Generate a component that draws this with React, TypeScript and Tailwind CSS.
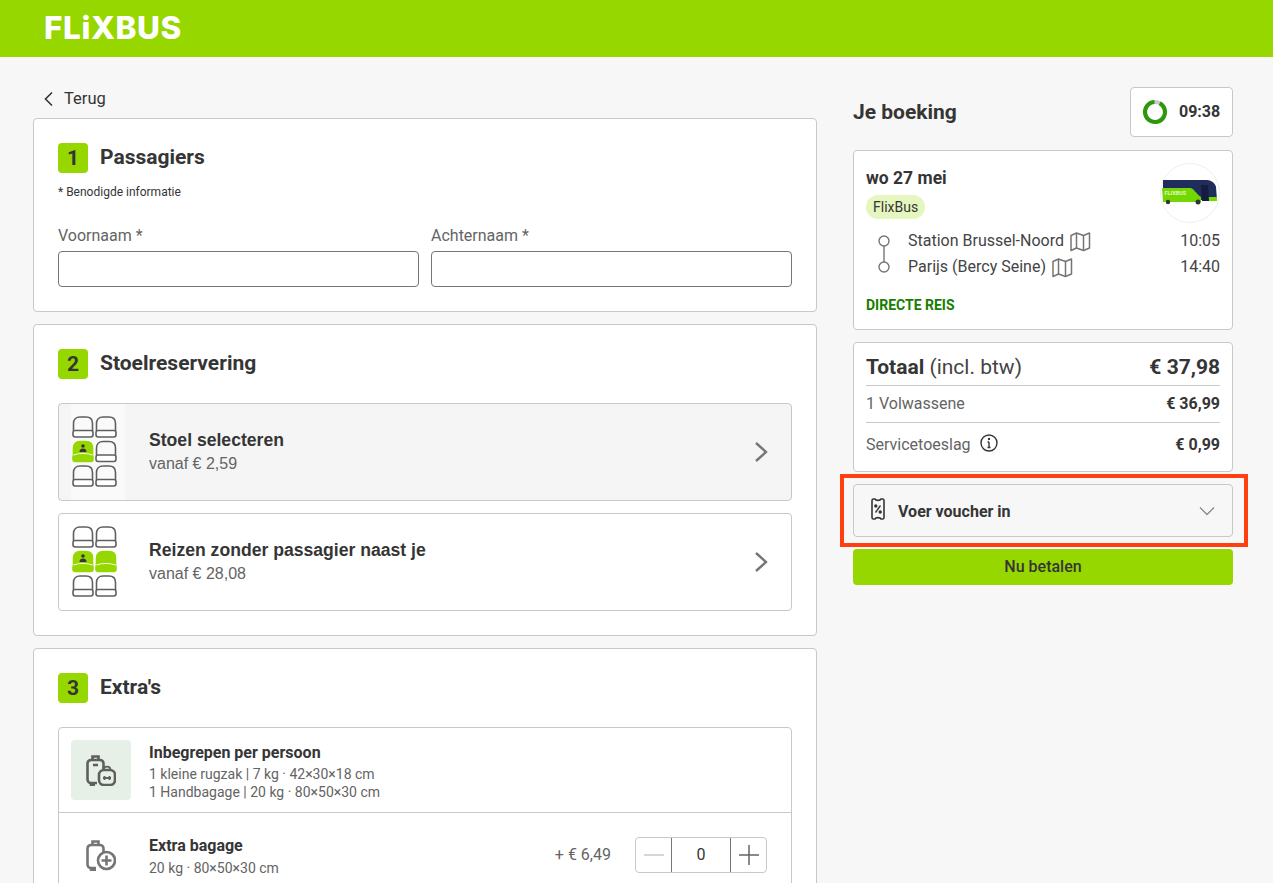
import React from "react";

const Seat = ({ x, y, on }: { x: number; y: number; on?: boolean }) => (
  <g transform={`translate(${x} ${y})`}>
    <path
      d="M1.500 15V7.500C1.500 3.500 4 1 8 1h6c4 0 6.500 2.500 6.500 6.500V15"
      fill={on ? "#97d700" : "none"}
      stroke={on ? "#97d700" : "#5f5f5f"}
      strokeWidth="1.600"
    />
    <rect x="1" y="14.500" width="20" height="6.500" rx="2.200" fill={on ? "#97d700" : "#fff"} stroke={on ? "#97d700" : "#5f5f5f"} strokeWidth="1.600" />
    {on && <path d="M1.500 14.500c5-2 14-2 19 0" fill="none" stroke="#fff" strokeWidth="1.200" />}
  </g>
);

const SeatIcon = ({ both }: { both?: boolean }) => (
  <svg width="50" height="72" viewBox="0 0 50 72" className="shrink-0">
    <Seat x={1} y={0} />
    <Seat x={24} y={0} />
    <Seat x={1} y={24.500} on />
    <Seat x={24} y={24.500} on={both} />
    <Seat x={1} y={49} />
    <Seat x={24} y={49} />
    <circle cx="12" cy="30" r="1.800" fill="#353535" />
    <path d="M8.500 36c0-2.500 1.500-3.500 3.500-3.500s3.500 1 3.500 3.500z" fill="#353535" />
  </svg>
);

const MapIcon = () => (
  <svg width="22" height="22" viewBox="0 0 22 22" fill="none" stroke="#757575" strokeWidth="1.500" strokeLinejoin="round" className="shrink-0">
    <path d="M2 5.500l5.500-2.500 7 2.500L20.500 3v15l-6 2.500L7.500 18 2 20.500z" />
    <path d="M7.500 3v15M14.500 5.500v15" />
  </svg>
);

const Badge = ({ n }: { n: number }) => (
  <span className="flex h-[30px] w-[30px] shrink-0 items-center justify-center rounded-[4px] bg-[#97d700] text-[21px] font-bold leading-none text-[#353535]">{n}</span>
);

const SectionTitle = ({ n, title }: { n: number; title: string }) => (
  <div className="flex items-center gap-3">
    <Badge n={n} />
    <h2 className="pb-[2px] text-[21px] font-bold leading-[28px]">{title}</h2>
  </div>
);

const Field = ({ label }: { label: string }) => (
  <div className="flex-1">
    <div className="mb-[3px] text-[16px] leading-[24px] text-[#646464]">{label}</div>
    <div className="h-[36px] rounded-[4px] border border-[#757575] bg-white" />
  </div>
);

const SeatRow = ({ title, price, both, active }: { title: string; price: string; both?: boolean; active?: boolean }) => (
  <div className={`flex h-[98px] items-center overflow-hidden rounded-[4px] border border-[#c8c8c8] pl-[12px] pr-[20px] ${active ? "bg-[#f5f5f5]" : "bg-white"}`}>
    <div className={`flex h-full w-[54px] shrink-0 items-center justify-start ${active ? "bg-[#fafafa]" : ""}`}>
      <SeatIcon both={both} />
    </div>
    <div className="ml-[24px] flex-1">
      <div className="text-[17.600px] font-bold leading-[22px] [font-family:'Liberation_Sans',sans-serif]">{title}</div>
      <div className="pt-[1px] text-[16px] leading-[24px] text-[#646464] [font-family:'Liberation_Sans',sans-serif]">{price}</div>
    </div>
    <svg width="20" height="24" viewBox="0 0 20 24" fill="none" stroke="#757575" strokeWidth="2.400">
      <path d="M5 3l10 9-10 9" />
    </svg>
  </div>
);

export default function App() {
  return (
    <div className="h-[883px] overflow-hidden bg-[#f7f7f7] text-[#353535] [font-family:Roboto,sans-serif]">
      <header className="flex h-[57px] items-center bg-[#97d700] pb-[2px] pl-[44px]">
        <span className="text-[31.500px] font-extrabold leading-none tracking-[0.6px] text-white [font-family:Inter,sans-serif]">FLiXBUS</span>
      </header>

      <main className="flex items-start gap-[36px] pl-[33px] pt-[30px]">
        <div className="w-[784px]">
          <div className="flex h-[31px] items-center gap-[9px] pb-[7px] pl-[9px] text-[16.500px] leading-[24px]">
            <svg width="13" height="16" viewBox="0 0 13 16" fill="none" stroke="#353535" strokeWidth="1.600">
              <path d="M10 1.500L3.500 8l6.500 6.500" />
            </svg>
            <span>Terug</span>
          </div>

          <div className="flex flex-col gap-[12px]">
            <section className="h-[194px] rounded-[4px] border border-[#c8c8c8] bg-white px-[24px] pt-[24px]">
              <SectionTitle n={1} title="Passagiers" />
              <p className="mt-[9px] text-[12px] leading-[20px]">* Benodigde informatie</p>
              <div className="mt-[22px] flex gap-[12px]">
                <Field label="Voornaam *" />
                <Field label="Achternaam *" />
              </div>
            </section>

            <section className="h-[312px] rounded-[4px] border border-[#c8c8c8] bg-white px-[24px] pt-[24px]">
              <SectionTitle n={2} title="Stoelreservering" />
              <div className="mt-[24px] flex flex-col gap-[12px]">
                <SeatRow title="Stoel selecteren" price="vanaf € 2,59" active />
                <SeatRow title="Reizen zonder passagier naast je" price="vanaf € 28,08" both />
              </div>
            </section>

            <section className="h-[300px] rounded-[4px] border border-[#c8c8c8] bg-white px-[24px] pt-[24px]">
              <SectionTitle n={3} title="Extra's" />
              <div className="mt-[24px] rounded-[4px] border border-[#c8c8c8]">
                <div className="flex h-[85px] items-center border-b border-[#c8c8c8] pl-[12px]">
                  <div className="flex h-[60px] w-[60px] items-center justify-center rounded-[4px] bg-[#e6f0e6]">
                    <svg width="30" height="31" viewBox="0 0 30 31" fill="none" stroke="#5f5f5f" strokeWidth="2.600">
                      <path d="M6.500 5V1.500h6V5M11 28H5a3.500 3.500 0 0 1-3.500-3.500V8.500A3.500 3.500 0 0 1 5 5h9a3.500 3.500 0 0 1 3.500 3.500V14" />
                      <path d="M5 28v2h4M7 10h5" />
                      <rect x="13" y="15" width="16" height="15" rx="5" fill="#e6f0e6" />
                      <path d="M17.500 15c0-4.500 7-4.500 7 0M17 23h8M18.500 21v4M23.500 21v4" strokeWidth="1.800" />
                    </svg>
                  </div>
                  <div className="ml-[18px] pt-[2px]">
                    <div className="mb-[1px] text-[16px] font-bold leading-[22px]">Inbegrepen per persoon</div>
                    <div className="text-[14px] leading-[18px] text-[#646464]">1 kleine rugzak | 7 kg · 42×30×18 cm</div>
                    <div className="text-[14px] leading-[18px] text-[#646464]">1 Handbagage | 20 kg · 80×50×30 cm</div>
                  </div>
                </div>
                <div className="flex h-[84px] items-center pl-[12px]">
                  <div className="flex h-[60px] w-[60px] items-center justify-center">
                    <svg width="30" height="31" viewBox="0 0 30 31" fill="none" stroke="#757575" strokeWidth="2.600">
                      <path d="M6.500 5V1.500h6V5M10 28H5a3.500 3.500 0 0 1-3.500-3.500V8.500A3.500 3.500 0 0 1 5 5h9a3.500 3.500 0 0 1 3.500 3.500V12" />
                      <path d="M5 28v2h5" />
                      <circle cx="20.500" cy="20.500" r="8.500" />
                      <path d="M20.500 15.500v10M15.500 20.500h10" />
                    </svg>
                  </div>
                  <div className="ml-[18px] flex-1 pt-[1px]">
                    <div className="text-[16px] font-bold leading-[24px]">Extra bagage</div>
                    <div className="text-[14px] leading-[20px] text-[#646464]">20 kg · 80×50×30 cm</div>
                  </div>
                  <span className="mr-[24px] text-[16px] text-[#646464]">+ € 6,49</span>
                  <div className="mr-[24px] flex h-[36px] w-[132px] overflow-hidden rounded-[4px] border border-[#c8c8c8]">
                    <div className="flex w-[35px] items-center justify-center">
                      <svg width="20" height="20" viewBox="0 0 20 20" stroke="#c8c8c8" strokeWidth="1.500"><path d="M0 10h20" /></svg>
                    </div>
                    <div className="flex flex-1 items-center justify-center border-x border-[#757575] text-[16px]">0</div>
                    <div className="flex w-[35px] items-center justify-center">
                      <svg width="20" height="20" viewBox="0 0 20 20" stroke="#646464" strokeWidth="1.500"><path d="M0 10h20M10 0v20" /></svg>
                    </div>
                  </div>
                </div>
              </div>
            </section>
          </div>
        </div>

        <aside className="w-[380px]">
          <div className="flex h-[50px] items-center justify-between">
            <h2 className="pt-[1px] text-[21px] font-bold">Je boeking</h2>
            <div className="flex h-[50px] w-[103px] items-center gap-[11px] rounded-[4px] border border-[#c8c8c8] bg-white pl-[11px]">
              <svg width="26" height="26" viewBox="0 0 26 26" fill="none" className="shrink-0">
                <circle cx="13" cy="13" r="10" stroke="#c8c8c8" strokeWidth="4" />
                <circle cx="13" cy="13" r="10" stroke="#2a9a08" strokeWidth="4" strokeDasharray="57 63" transform="rotate(-62 13 13)" />
              </svg>
              <span className="text-[16px] font-bold">09:38</span>
            </div>
          </div>

          <div className="mt-[13px] h-[180px] rounded-[4px] border border-[#c8c8c8] bg-white px-[12px] pt-[12px]">
            <div className="flex items-start justify-between">
              <div>
                <div className="mt-[3px] text-[17.500px] font-bold leading-[24px]">wo 27 mei</div>
                <span className="mt-[5px] inline-block rounded-full bg-[#e5f7bf] px-[7px] text-[14px] leading-[24px]">FlixBus</span>
              </div>
              <div className="flex h-[60px] w-[60px] items-center justify-center rounded-full border border-[#eeeeee] bg-white">
                <svg width="56" height="26" viewBox="0 0 56 26" className="-mt-[2px]">
                  <path d="M1 1h44c4 0 8 3 9 7l1 13H1z" fill="#1f2c5c" />
                  <path d="M0 9h28c4 0 6 6 11 9v5H1z" fill="#73d700" />
                  <path d="M43 18h12v4H43z" fill="#73d700" />
                  <path d="M39 6h7l1 16h-7z" fill="#141d40" />
                  <circle cx="6" cy="23" r="2.200" fill="#333" />
                  <circle cx="36" cy="23" r="2.500" fill="#333" />
                  <text x="2.500" y="15.500" fontSize="5.500" fontWeight="700" fill="#e8f7c8">FLIXBUS</text>
                </svg>
              </div>
            </div>
            <div className="mt-[5px] flex">
              <svg width="36" height="52" viewBox="0 0 36 52" fill="none" stroke="#757575" strokeWidth="1.400" className="shrink-0">
                <circle cx="18" cy="13" r="5" />
                <path d="M18 18v16" />
                <circle cx="18" cy="39" r="5" />
              </svg>
              <div className="ml-[6px] flex-1 text-[16px] leading-[26px] text-[#444]">
                <div className="flex items-center justify-between">
                  <span className="flex items-center gap-[5px]">Station Brussel-Noord <MapIcon /></span>
                  <span>10:05</span>
                </div>
                <div className="flex items-center justify-between">
                  <span className="flex items-center gap-[5px]">Parijs (Bercy Seine) <MapIcon /></span>
                  <span>14:40</span>
                </div>
              </div>
            </div>
            <div className="mt-[15px] text-[14px] font-bold leading-[20px] text-[#187d00]">DIRECTE REIS</div>
          </div>

          <div className="mt-[12px] rounded-[4px] border border-[#c8c8c8] bg-white px-[12px]">
            <div className="flex h-[43px] items-center justify-between border-b border-[#c8c8c8] pt-[7px] text-[21px]">
              <span><b className="font-bold">Totaal</b> <span className="text-[#444]">(incl. btw)</span></span>
              <b className="font-bold">€ 37,98</b>
            </div>
            <div className="flex h-[37px] items-center justify-between border-b border-[#c8c8c8] text-[16px] text-[#646464]">
              <span>1 Volwassene</span>
              <b className="font-bold text-[#353535]">€ 36,99</b>
            </div>
            <div className="flex h-[48px] items-center justify-between pb-[5px] text-[16px] text-[#646464]">
              <span className="flex items-center gap-[9px]">
                Servicetoeslag
                <svg width="18" height="18" viewBox="0 0 18 18" fill="none" stroke="#353535" strokeWidth="1.400" className="-mt-[4px]">
                  <circle cx="9" cy="9" r="8" />
                  <path d="M9 8v5.500M7.500 13.500h3M7.500 8H9" />
                  <circle cx="9" cy="5" r="0.500" />
                </svg>
              </span>
              <b className="font-bold text-[#353535]">€ 0,99</b>
            </div>
          </div>

          <div className="relative mt-[12px] flex h-[53px] items-center rounded-[4px] border border-[#c8c8c8] bg-[#f7f7f7] pl-[16px] pr-[16px]">
            <svg width="16" height="22" viewBox="0 0 16 22" fill="none" stroke="#353535" strokeWidth="1.600" className="-mt-[3px] shrink-0">
              <path d="M2 2.500C2 1.700 2.600 1 3.500 1H5c.6 1.800 5.400 1.800 6 0h1.500c.9 0 1.500.7 1.500 1.500v17c0 .8-.6 1.500-1.500 1.500H11c-.6-1.800-5.400-1.800-6 0H3.500C2.600 21 2 20.300 2 19.500z" />
              <path d="M5.500 14.500l5-7" strokeWidth="1.400" />
              <circle cx="5.800" cy="8" r="0.900" fill="#353535" />
              <circle cx="10.200" cy="14" r="0.900" fill="#353535" />
            </svg>
            <span className="ml-[12px] flex-1 pt-[2px] text-[16px] font-bold">Voer voucher in</span>
            <svg width="18" height="12" viewBox="0 0 18 12" fill="none" stroke="#8a8a8a" strokeWidth="1.300">
              <path d="M2 2.500l7 7 7-7" />
            </svg>
            <div className="pointer-events-none absolute -bottom-[11px] -left-[14px] -right-[16px] -top-[11px] border-[4px] border-[#ff3f0f]" />
          </div>

          <div className="mt-[12px] flex h-[36px] items-center justify-center rounded-[4px] bg-[#97d700] text-[16px] font-medium">Nu betalen</div>
        </aside>
      </main>
    </div>
  );
}
